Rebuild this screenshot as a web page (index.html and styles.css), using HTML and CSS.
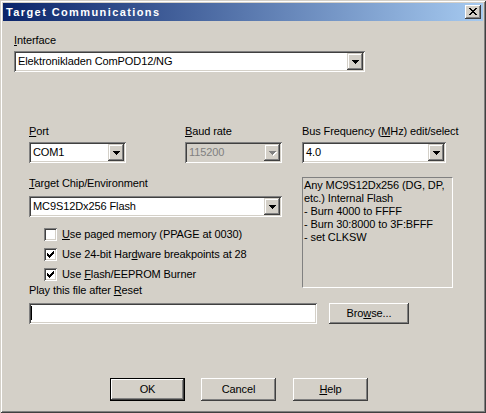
FILE: index.html
```html
<!DOCTYPE html>
<html>
<head>
<meta charset="utf-8">
<title>Target Communications</title>
<link rel="stylesheet" href="styles.css">
</head>
<body>
<div class="window">
  <div class="titlebar">
    <span class="title">Target Communications</span>
    <span class="close-btn">
      <svg width="8" height="7" viewBox="0 0 8 7" shape-rendering="crispEdges">
        <path d="M0 0h2v1h-2zM6 0h2v1h-2zM1 1h2v1h-2zM5 1h2v1h-2zM2 2h4v1h-4zM3 3h2v1h-2zM2 4h4v1h-4zM1 5h2v1h-2zM5 5h2v1h-2zM0 6h2v1h-2zM6 6h2v1h-2z" fill="#000"/>
      </svg>
    </span>
  </div>

  <div class="lbl lbl-interface"><u>I</u>nterface</div>
  <div class="combo combo-interface">
    <span class="value">Elektronikladen ComPOD12/NG</span>
    <span class="drop"><svg width="7" height="4" viewBox="0 0 7 4" shape-rendering="crispEdges"><path d="M0 0h7v1h-7zM1 1h5v1h-5zM2 2h3v1h-3zM3 3h1v1h-1z" fill="#000"/></svg></span>
  </div>

  <div class="row-ports">
    <div class="col col-port">
      <div class="lbl"><u>P</u>ort</div>
      <div class="combo">
        <span class="value">COM1</span>
        <span class="drop"><svg width="7" height="4" viewBox="0 0 7 4" shape-rendering="crispEdges"><path d="M0 0h7v1h-7zM1 1h5v1h-5zM2 2h3v1h-3zM3 3h1v1h-1z" fill="#000"/></svg></span>
      </div>
    </div>
    <div class="col col-baud">
      <div class="lbl"><u>B</u>aud rate</div>
      <div class="combo disabled">
        <span class="value">115200</span>
        <span class="drop"><svg width="8" height="5" viewBox="0 0 8 5" shape-rendering="crispEdges"><path d="M1 1h7v1h-7zM2 2h5v1h-5zM3 3h3v1h-3zM4 4h1v1h-1z" fill="#fff"/><path d="M0 0h7v1h-7zM1 1h5v1h-5zM2 2h3v1h-3zM3 3h1v1h-1z" fill="#808080"/></svg></span>
      </div>
    </div>
    <div class="col col-bus">
      <div class="lbl">Bus Frequency (<u>M</u>Hz) edit/select</div>
      <div class="combo">
        <span class="value">4.0</span>
        <span class="drop"><svg width="7" height="4" viewBox="0 0 7 4" shape-rendering="crispEdges"><path d="M0 0h7v1h-7zM1 1h5v1h-5zM2 2h3v1h-3zM3 3h1v1h-1z" fill="#000"/></svg></span>
      </div>
    </div>
  </div>

  <div class="row-mid">
    <div class="col-left">
      <div class="lbl"><u>T</u>arget Chip/Environment</div>
      <div class="combo combo-target">
        <span class="value">MC9S12Dx256 Flash</span>
        <span class="drop"><svg width="7" height="4" viewBox="0 0 7 4" shape-rendering="crispEdges"><path d="M0 0h7v1h-7zM1 1h5v1h-5zM2 2h3v1h-3zM3 3h1v1h-1z" fill="#000"/></svg></span>
      </div>
      <div class="checks">
        <div class="check-row">
          <span class="checkbox"></span>
          <span class="check-label"><u>U</u>se paged memory (PPAGE at 0030)</span>
        </div>
        <div class="check-row">
          <span class="checkbox"><svg width="7" height="7" viewBox="0 0 7 7" shape-rendering="crispEdges"><path d="M0 2h1v3h-1zM1 3h1v3h-1zM2 4h1v3h-1zM3 3h1v3h-1zM4 2h1v3h-1zM5 1h1v3h-1zM6 0h1v3h-1z" fill="#000"/></svg></span>
          <span class="check-label">Use 24-bit Har<u>d</u>ware breakpoints at 28</span>
        </div>
        <div class="check-row">
          <span class="checkbox"><svg width="7" height="7" viewBox="0 0 7 7" shape-rendering="crispEdges"><path d="M0 2h1v3h-1zM1 3h1v3h-1zM2 4h1v3h-1zM3 3h1v3h-1zM4 2h1v3h-1zM5 1h1v3h-1zM6 0h1v3h-1z" fill="#000"/></svg></span>
          <span class="check-label">Use <u>F</u>lash/EEPROM Burner</span>
        </div>
      </div>
      <div class="lbl">Play this file after <u>R</u>eset</div>
    </div>
    <div class="desc">Any MC9S12Dx256 (DG, DP,<br>etc.) Internal Flash<br>- Burn 4000 to FFFF<br>- Burn 30:8000 to 3F:BFFF<br>- set CLKSW</div>
  </div>

  <div class="row-file">
    <div class="edit"><span class="caret"></span></div>
    <div class="btn btn-browse">Bro<u>w</u>se...</div>
  </div>

  <div class="row-buttons">
    <div class="btn btn-default"><span class="btn-inner">OK</span></div>
    <div class="btn btn-cancel">Cancel</div>
    <div class="btn btn-help"><u>H</u>elp</div>
  </div>
</div>
</body>
</html>
```

FILE: styles.css
```css
* { box-sizing: border-box; }

html, body {
  margin: 0;
  padding: 0;
  background: #d4d0c8;
}

body {
  font-family: "Liberation Sans", Arial, sans-serif;
  font-size: 11px;
  line-height: 13px;
  letter-spacing: -0.1px;
  color: #000;
}

u { text-decoration: underline; text-underline-offset: 1px; }

.window {
  width: 486px;
  height: 413px;
  padding: 3px;
  background: #d4d0c8;
  box-shadow: inset 1px 1px #d4d0c8, inset -1px -1px #404040, inset 2px 2px #fff, inset -2px -2px #808080;
  display: flex;
  flex-direction: column;
  overflow: hidden;
}

.titlebar {
  height: 18px;
  flex: none;
  display: flex;
  align-items: center;
  justify-content: space-between;
  padding: 0 2px 0 3px;
  background: linear-gradient(to right, #0a246a, #a6caf0);
}

.title {
  color: #fff;
  font-weight: bold;
  font-size: 11px;
  letter-spacing: 1.4px;
  line-height: 13px;
}

.close-btn {
  width: 16px;
  height: 14px;
  display: flex;
  align-items: center;
  justify-content: center;
  background: #d4d0c8;
  box-shadow: inset -1px -1px #404040, inset 1px 1px #fff, inset -2px -2px #808080;
  padding-bottom: 1px;
}

.lbl {
  height: 13px;
  line-height: 13px;
  white-space: nowrap;
}

.lbl-interface {
  margin: 13px 0 0 11px;
}

.combo {
  display: flex;
  height: 21px;
  padding: 2px;
  background: #fff;
  box-shadow: inset 1px 1px #808080, inset -1px -1px #fff, inset 2px 2px #404040, inset -2px -2px #d4d0c8;
}

.combo .value {
  flex: 1;
  line-height: 17px;
  padding-left: 2px;
  white-space: nowrap;
  overflow: hidden;
}

.combo .drop {
  width: 16px;
  height: 17px;
  flex: none;
  display: flex;
  align-items: center;
  justify-content: center;
  background: #d4d0c8;
  box-shadow: inset -1px -1px #404040, inset 1px 1px #d4d0c8, inset -2px -2px #808080, inset 2px 2px #fff;
}

.combo.disabled {
  background: #d4d0c8;
}

.combo.disabled .value {
  color: #808080;
}

.combo.disabled .drop svg {
  margin: 1px 0 0 1px;
}

.combo-interface {
  width: 351px;
  margin: 4px 0 0 11px;
}

.row-ports {
  display: flex;
  margin: 53px 0 0 26px;
}

.col .lbl { margin-bottom: 4px; }

.col-port { width: 97px; }
.col-baud { width: 97px; margin-left: 59px; }
.col-bus { width: 144px; margin-left: 20px; }

.row-mid {
  display: flex;
  margin: 14px 0 0 26px;
}

.col-left {
  width: 253px;
  display: flex;
  flex-direction: column;
}

.combo-target {
  margin-top: 6px;
}

.checks {
  margin: 7px 0 0 15px;
}

.check-row {
  height: 20px;
  display: flex;
  align-items: center;
}

.checkbox {
  width: 13px;
  height: 13px;
  flex: none;
  padding: 3px;
  background: #fff;
  box-shadow: inset 1px 1px #808080, inset -1px -1px #fff, inset 2px 2px #404040, inset -2px -2px #d4d0c8;
  display: flex;
}

.check-label {
  margin-left: 5px;
  white-space: nowrap;
}

.desc {
  width: 151px;
  height: 111px;
  margin-left: 20px;
  border: 1px solid;
  border-color: #808080 #fff #fff #808080;
  padding: 1px 0 0 1px;
  line-height: 13px;
  white-space: nowrap;
}

.row-file {
  display: flex;
  margin: 6px 0 0 26px;
}

.edit {
  width: 288px;
  height: 21px;
  padding: 3px 0 0 2px;
  background: #fff;
  box-shadow: inset 1px 1px #808080, inset -1px -1px #fff, inset 2px 2px #404040, inset -2px -2px #d4d0c8;
}

.caret {
  display: block;
  width: 1px;
  height: 14px;
  margin-left: 0;
  background: #000;
}

.btn {
  height: 23px;
  width: 75px;
  display: flex;
  align-items: center;
  justify-content: center;
  background: #d4d0c8;
  box-shadow: inset -1px -1px #404040, inset 1px 1px #fff, inset -2px -2px #808080, inset 2px 2px #d4d0c8;
  line-height: 13px;
  white-space: nowrap;
}

.btn-browse {
  width: 80px;
  height: 21px;
  margin-left: 12px;
}

.row-buttons {
  display: flex;
  margin: 54px 0 0 107px;
}

.btn-default {
  border: 1px solid #000;
  box-shadow: none;
  padding: 0;
}

.btn-default .btn-inner {
  width: 100%;
  height: 100%;
  display: flex;
  align-items: center;
  justify-content: center;
  box-shadow: inset -1px -1px #404040, inset 1px 1px #fff, inset -2px -2px #808080;
}

.btn-cancel { margin-left: 16px; }
.btn-help { margin-left: 17px; }
```
